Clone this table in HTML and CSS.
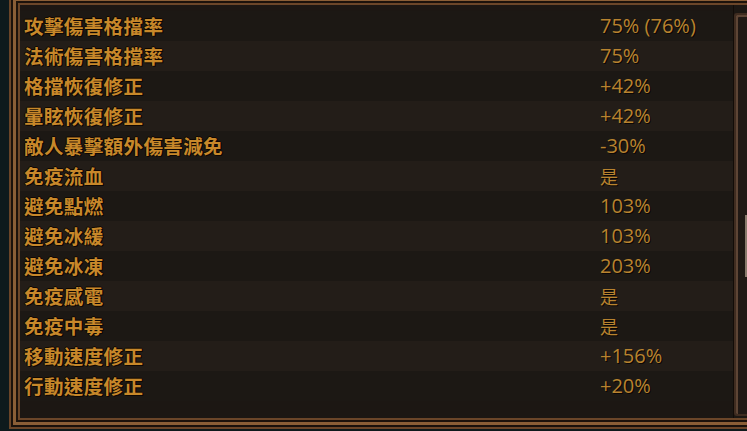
FILE: index.html
```html
<!DOCTYPE html>
<html lang="zh-Hant">
<head>
<meta charset="utf-8">
<link rel="stylesheet" href="styles.css">
</head>
<body>
<div class="frame">
  <div class="gap1">
    <div class="mid">
      <div class="gap2">
        <div class="inner">
          <div class="panel">
            <div class="rows">
              <div class="row"><span class="label">攻擊傷害格擋率</span><span class="value">75% (76%)</span></div>
              <div class="row"><span class="label">法術傷害格擋率</span><span class="value">75%</span></div>
              <div class="row"><span class="label">格擋恢復修正</span><span class="value">+42%</span></div>
              <div class="row"><span class="label">暈眩恢復修正</span><span class="value">+42%</span></div>
              <div class="row"><span class="label">敵人暴擊額外傷害減免</span><span class="value">-30%</span></div>
              <div class="row"><span class="label">免疫流血</span><span class="value cjk">是</span></div>
              <div class="row"><span class="label">避免點燃</span><span class="value">103%</span></div>
              <div class="row"><span class="label">避免冰緩</span><span class="value">103%</span></div>
              <div class="row"><span class="label">避免冰凍</span><span class="value">203%</span></div>
              <div class="row"><span class="label">免疫感電</span><span class="value cjk">是</span></div>
              <div class="row"><span class="label">免疫中毒</span><span class="value cjk">是</span></div>
              <div class="row"><span class="label">移動速度修正</span><span class="value">+156%</span></div>
              <div class="row"><span class="label">行動速度修正</span><span class="value">+20%</span></div>
            </div>
            <div class="scrollbar">
              <div class="track"><div class="thumb"></div></div>
            </div>
          </div>
        </div>
      </div>
    </div>
  </div>
</div>
</body>
</html>
```

FILE: styles.css
```css
html, body {
  margin: 0;
  padding: 0;
  background: #0e1a1c;
  overflow: hidden;
  width: 747px;
  height: 431px;
}

.frame {
  margin-left: 9px;
  margin-top: -6px;
  width: 770px;
  border: 2px solid #6a4528;
  background: #150e09;
}
.gap1 {
  border: 2px solid #1a110b;
}
.mid {
  border: 3px solid #8a5e36;
}
.gap2 {
  border: 2px solid #1c120b;
}
.inner {
  border: 2px solid #6b4629;
}

.panel {
  display: flex;
  background: #1c1713;
}

.rows {
  width: 713px;
  padding: 6px 0 17px;
}

.row {
  display: grid;
  grid-template-columns: 576px 1fr;
  align-items: center;
  height: 30px;
  padding-left: 4px;
  background: #1c1814;
}
.row:nth-child(even) {
  background: #231d18;
}

.label {
  font-family: "Noto Sans CJK TC", "Noto Sans CJK SC", sans-serif;
  font-weight: 700;
  font-size: 19.5px;
  letter-spacing: 0.4px;
  color: #c7882a;
  text-shadow: 1px 1px 0 #0e0703, -1px 0 0 #0e0703, 0 -1px 0 #0e0703, 1px 0 0 #0e0703;
  line-height: 30px;
}

.value {
  font-family: "Open Sans", "Noto Sans CJK TC", sans-serif;
  font-size: 20px;
  color: #b8832f;
  line-height: 30px;
  text-shadow: 1px 1px 0 #0c0704;
}
.value.cjk {
  font-family: "Noto Sans CJK TC", sans-serif;
  font-size: 18px;
}

.scrollbar {
  flex: 1;
  padding-top: 8px;
  padding-bottom: 2px;
  border-left: 1px solid #120c08;
}
.track {
  height: 100%;
  box-sizing: border-box;
  border: 2px solid #3f2c20;
  border-right: none;
  border-radius: 3px 0 0 3px;
  background: #211915;
  padding: 200px 0 0 9px;
  box-shadow: inset 2px 2px 0 #5e4535;
}
.thumb {
  height: 60px;
  border-left: 2px solid #8a7a6c;
  border-top: 2px solid #8a7a6c;
  background: #3a2d24;
}
```
